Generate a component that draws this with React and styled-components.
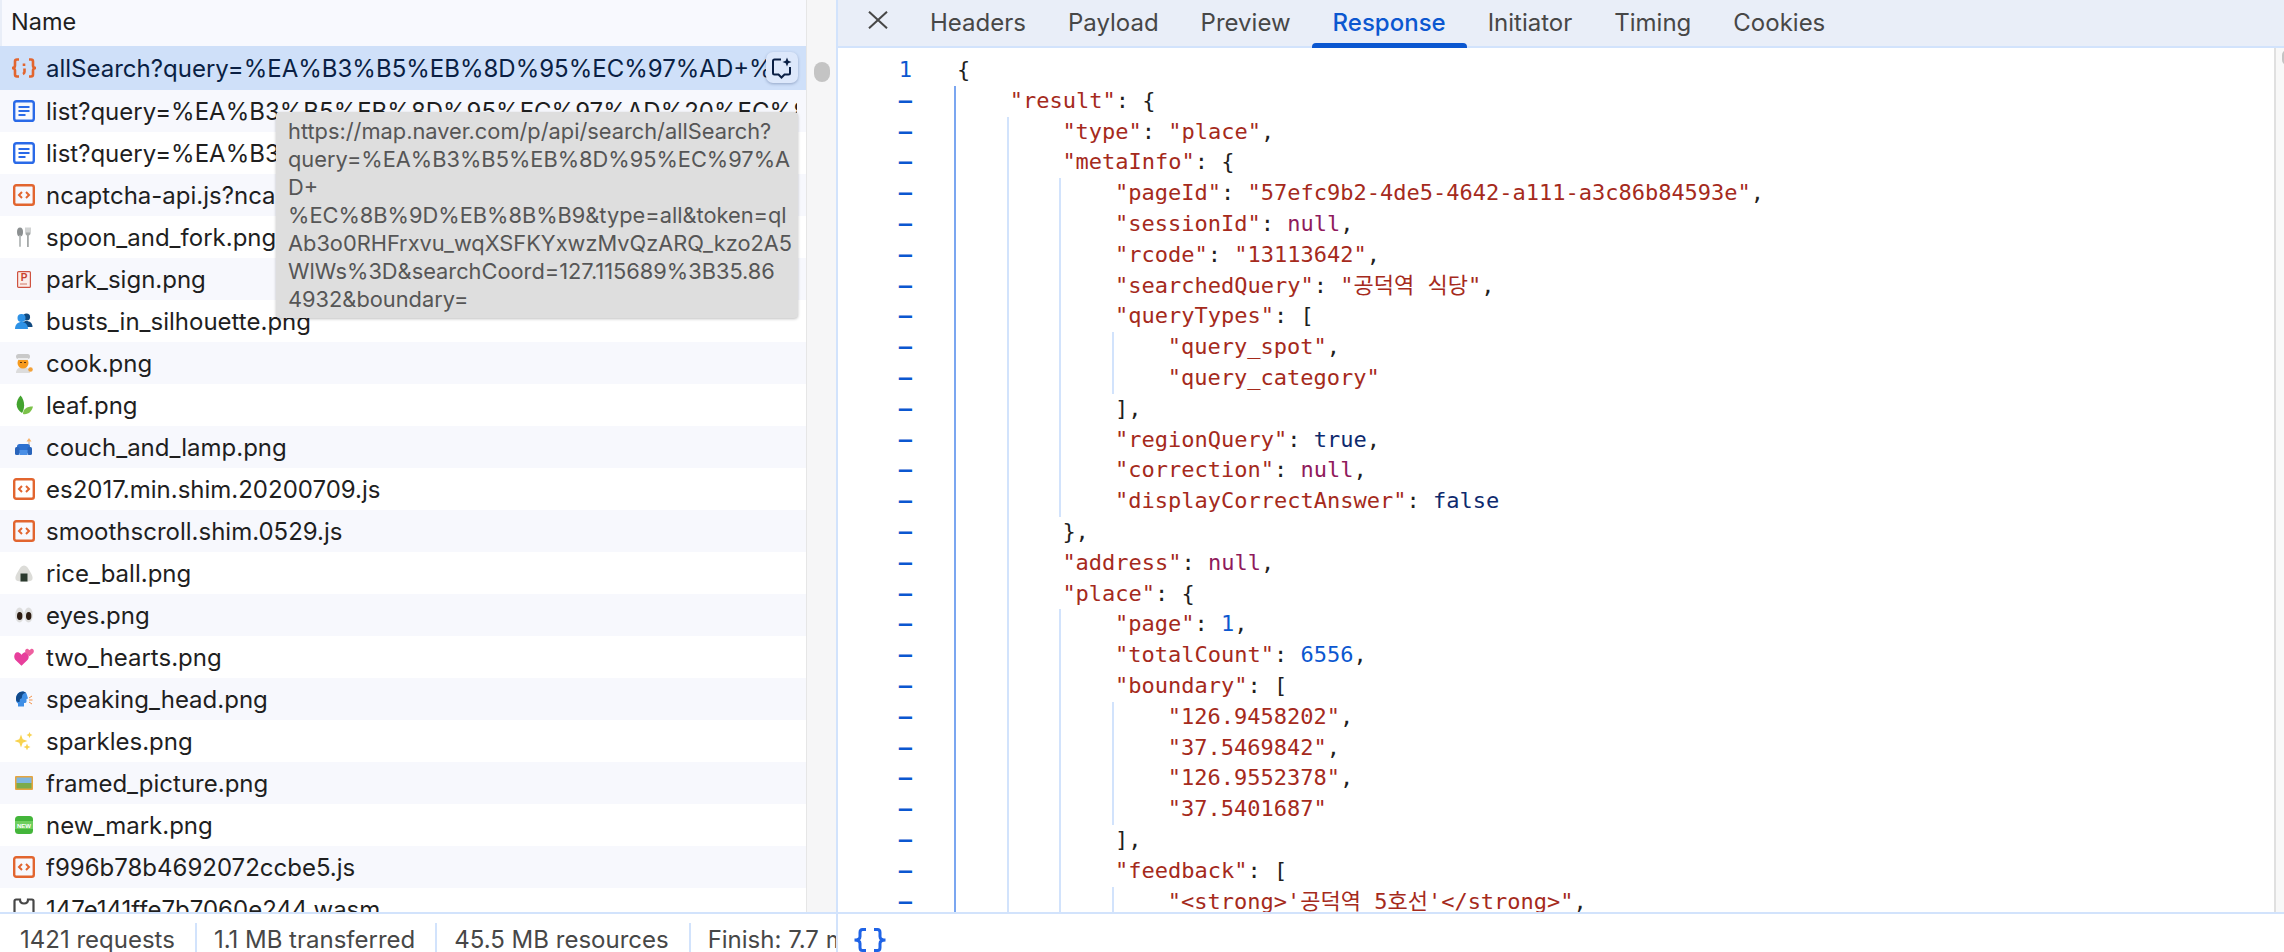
import React from 'react';
import styled, { createGlobalStyle } from 'styled-components';

const GlobalStyle = createGlobalStyle`
  html, body { margin: 0; padding: 0; height: 100%; overflow: hidden; background: #fff; }
  #root { height: 100%; }
`;

const uiFont = `Inter, "Noto Sans", sans-serif`;
const monoFont = `"DejaVu Sans Mono", "Noto Sans CJK KR", monospace`;

const Shell = styled.div`
  display: flex;
  width: 2284px;
  height: 952px;
  overflow: hidden;
  font-family: ${uiFont};
`;

const LeftPane = styled.div`
  display: flex;
  flex-direction: column;
  width: 836px;
  flex-shrink: 0;
  border-right: 2px solid #d2e3fc;
`;

const ListArea = styled.div`
  flex: 1;
  min-height: 0;
  display: flex;
  position: relative;
`;

const ListColumn = styled.div`
  width: 806px;
  flex-shrink: 0;
  overflow: hidden;
`;

const ListHeader = styled.div`
  height: 46px;
  display: flex;
  align-items: center;
  padding: 0 0 3px 9px;
  border-left: 2px solid #e9eef8;
  background: #f8f9fe;
  color: #1f1f1f;
  font-size: 23.5px;
  box-sizing: border-box;
`;

const Row = styled.div`
  position: relative;
  display: flex;
  align-items: center;
  height: ${(p) => (p.$selected ? 44 : 42)}px;
  padding-left: 13px;
  padding-right: 9px;
  box-sizing: border-box;
  background: ${(p) => (p.$selected ? '#cfe0f9' : p.$striped ? '#f7f8fd' : '#fff')};
  color: ${(p) => (p.$selected ? '#0a1f44' : '#1f1f1f')};
  font-size: 24px;
`;

const RowIcon = styled.span`
  width: 22px;
  height: 22px;
  flex-shrink: 0;
  display: flex;
  align-items: center;
  justify-content: center;
  margin-right: 11px;
  & > svg {
    flex-shrink: 0;
  }
`;

const RowName = styled.span`
  white-space: nowrap;
  overflow: hidden;
`;

const AskButton = styled.button`
  position: absolute;
  right: 8px;
  top: 6px;
  width: 32px;
  height: 31px;
  padding: 0;
  border: 0;
  border-radius: 7px;
  background: #dde8fb;
  box-shadow: 0 1px 3px rgba(40, 60, 110, 0.35);
  display: flex;
  align-items: center;
  justify-content: center;
`;

const ScrollColumn = styled.div`
  flex: 1;
  border-left: 1px solid #e6e6e6;
  background: #f6f6f7;
  padding: 62px 6px 0 7px;
  box-sizing: border-box;
`;

const ScrollThumb = styled.div`
  width: 16px;
  height: 20px;
  border-radius: 8px;
  background: #c4c4c4;
`;

const Tooltip = styled.div`
  position: absolute;
  left: 276px;
  top: 112px;
  width: 522px;
  height: 206px;
  box-sizing: border-box;
  padding: 5px 0 0 12px;
  background: #dedede;
  border-radius: 4px;
  box-shadow: 0 1px 3px rgba(0, 0, 0, 0.25);
  color: #565656;
  font-size: 21.8px;
  line-height: 28px;
  white-space: nowrap;
`;

const StatusBar = styled.div`
  height: 40px;
  flex-shrink: 0;
  box-sizing: border-box;
  border-top: 2px solid #d2e3fc;
  display: flex;
  align-items: flex-end;
  overflow: hidden;
  background: #fff;
`;

const StatusItem = styled.div`
  height: 29px;
  padding: 0 20px 0 17px;
  white-space: nowrap;
  color: #474747;
  font-size: 24px;
  line-height: 33px;
  border-right: ${(p) => (p.$last ? '0' : '2px solid #d2e3fc')};
  &:first-child {
    padding-left: 20px;
  }
`;

const RightPane = styled.div`
  flex: 1;
  min-width: 0;
  display: flex;
  flex-direction: column;
`;

const TabBar = styled.div`
  height: 48px;
  flex-shrink: 0;
  box-sizing: border-box;
  display: flex;
  background: #e9eef8;
  border-bottom: 2px solid #d2e3fc;
`;

const CloseButton = styled.div`
  width: 71px;
  height: 40px;
  padding-left: 9px;
  box-sizing: border-box;
  display: flex;
  align-items: center;
  justify-content: center;
`;

const Tab = styled.div`
  position: relative;
  height: 46px;
  padding: 0 21px 1px;
  box-sizing: border-box;
  display: flex;
  align-items: center;
  font-size: 24px;
  font-weight: ${(p) => (p.$active ? 500 : 400)};
  color: ${(p) => (p.$active ? '#0b57d0' : '#474747')};
  &::after {
    content: '';
    display: ${(p) => (p.$active ? 'block' : 'none')};
    position: absolute;
    left: 0;
    right: 0;
    bottom: -2px;
    height: 5px;
    border-radius: 4px 4px 0 0;
    background: #0b57d0;
  }
`;

const ResponseBody = styled.div`
  flex: 1;
  min-height: 0;
  display: flex;
  overflow: hidden;
`;

const Gutter = styled.div`
  width: 74px;
  flex-shrink: 0;
  padding-top: 7px;
  margin-right: 42px;
  text-align: right;
  font-family: ${monoFont};
  font-size: 22px;
  line-height: 30.8px;
  color: #0b57d0;
  font-weight: 700;
`;

const GutterMark = styled.div`
  height: 30.8px;
  font-weight: ${(p) => (p.$number ? 400 : 700)};
`;

const Code = styled.div`
  flex: 1;
  min-width: 0;
  padding-top: 7px;
  font-family: ${monoFont};
  font-size: 22px;
  line-height: 30.8px;
  color: #1f1f1f;
  white-space: pre;
`;

const Line = styled.div`
  height: 30.8px;
  padding-left: 3px;
`;

const Block = styled.div`
  border-left: 2px solid ${(p) => (p.$active ? '#7ba6f0' : '#d2e3fc')};
  padding-left: 50.7px;
`;

const Str = styled.span`color: #a52a1c;`;
const Nil = styled.span`color: #8f1a5c;`;
const Num = styled.span`color: #0b57d0;`;
const Bool = styled.span`color: #0e2a6e;`;

const RightScroll = styled.div`
  width: 10px;
  flex-shrink: 0;
  box-sizing: border-box;
  border-left: 2px solid #e0e0e0;
  background: #f8f8f8;
  padding: 2px 0 0 6px;
  overflow: hidden;
`;

const RightThumb = styled.div`
  width: 10px;
  height: 15px;
  border-radius: 5px;
  background: #c4c4c4;
`;

const FormatIcon = styled.div`
  padding: 14px 0 0 15px;
  line-height: 0;
`;

const DocIcon = () => (
  <svg width="22" height="22" viewBox="0 0 22 22" fill="none">
    <rect x="1.2" y="1.2" width="19.6" height="19.6" rx="2.4" stroke="#2a6ae8" strokeWidth="2.4" />
    <path d="M5.5 7h11M5.5 11h11M5.5 15h7" stroke="#2a6ae8" strokeWidth="2" />
  </svg>
);

const ScriptIcon = () => (
  <svg width="22" height="22" viewBox="0 0 22 22" fill="none">
    <rect x="1.2" y="1.2" width="19.6" height="19.6" rx="2" stroke="#e2652f" strokeWidth="2.4" />
    <path d="M9 8l-3 3 3 3M13 8l3 3-3 3" stroke="#e2652f" strokeWidth="2" />
  </svg>
);

const JsonIcon = () => (
  <svg width="26" height="20" viewBox="0 0 26 20" fill="none" stroke="#e2652f" strokeWidth="2.6">
    <path d="M8 1.500H6C4.500 1.500 4 2.500 4 3.500v4C4 9 3 10 1 10c2 0 3 1 3 2.500v4c0 1 .5 2 2 2h2" />
    <path d="M18 1.500h2c1.500 0 2 1 2 2v4c0 1.500 1 2.500 3 2.500-2 0-3 1-3 2.500v4c0 1-.5 2-2 2h-2" />
    <path d="M13 5.500v2.500M13.500 10.500v3.500c0 .8-.6 1.500-1.600 2" />
  </svg>
);

const WasmIcon = () => (
  <svg width="22" height="22" viewBox="0 0 22 22" fill="none">
    <path d="M7 1.500H3a1.500 1.500 0 0 0-1.500 1.500v16a1.500 1.500 0 0 0 1.500 1.500h16a1.500 1.500 0 0 0 1.500-1.500V3A1.500 1.500 0 0 0 19 1.500h-4c0 2.500-1.500 4-4 4s-4-1.500-4-4z" stroke="#474747" strokeWidth="2.2" />
  </svg>
);

const Spoon = () => (
  <svg width="16" height="20" viewBox="0 0 16 20">
    <ellipse cx="4" cy="5" rx="3" ry="4.500" fill="#8b8f90" />
    <rect x="3.100" y="8" width="1.800" height="12" rx=".9" fill="#b4b8b8" />
    <path d="M9.500 0.500v6c0 1 .8 1.800 1.500 2V20h1.800V8.500c.8-.2 1.700-1 1.700-2v-6h-1v5h-1v-5h-1v5h-1v-5z" fill="#a4a8a8" />
  </svg>
);

const Park = () => (
  <svg width="14" height="17" viewBox="0 0 14 17">
    <rect x=".6" y=".6" width="12.800" height="15.800" rx="1" fill="#fbeeea" stroke="#cf5240" strokeWidth="1.200" />
    <text x="7" y="10" textAnchor="middle" fontFamily="Liberation Sans, sans-serif" fontWeight="700" fontSize="10" fill="#c9402e">P</text>
    <path d="M3 13h7" stroke="#d98a7c" strokeWidth="1.200" />
  </svg>
);

const Busts = () => (
  <svg width="18" height="18" viewBox="0 0 18 18">
    <circle cx="11.500" cy="5" r="3.600" fill="#114a80" />
    <path d="M6 15c0-4 2.500-6 5.500-6s6 2 6 6z" fill="#114a80" />
    <circle cx="6.500" cy="6" r="4" fill="#2e92e6" />
    <path d="M0 17c0-4.500 3-7 6.500-7s6.500 2.500 6.500 7z" fill="#2e92e6" />
  </svg>
);

const Cook = () => (
  <svg width="20" height="20" viewBox="0 0 20 20">
    <path d="M2 20c0-4 3-6 7-6s7 2 7 6z" fill="#dcdcdc" />
    <circle cx="9" cy="10" r="5.500" fill="#f59a1e" />
    <path d="M6 9.500h2M10 9.500h2" stroke="#5a3510" strokeWidth="1" />
    <rect x="2" y="1" width="14" height="5" rx="2.500" fill="#c9c9c9" />
    <path d="M4 5h10v2H4z" fill="#ececec" />
    <circle cx="16.500" cy="16.500" r="2.300" fill="#f2a23a" />
  </svg>
);

const Leaf = () => (
  <svg width="18" height="20" viewBox="0 0 18 20">
    <path d="M7 18C1 15-.5 7 5.500 .5 9.500 5 10.500 12 7 18z" fill="#43a32f" />
    <path d="M8 19c0-5 3.500-7.500 10-7.500-1 5-5 8.500-10 7.500z" fill="#7cc24a" />
  </svg>
);

const Couch = () => (
  <svg width="18" height="18" viewBox="0 0 18 18">
    <path d="M14 0l2.500 3.500h-5z" fill="#f6b26b" />
    <path d="M14 3.500V8" stroke="#c99a6a" strokeWidth=".9" />
    <rect x="2" y="6" width="13" height="9" rx="2.500" fill="#2f71cf" />
    <rect x="0" y="9" width="4.500" height="8" rx="1.500" fill="#2a65bb" />
    <rect x="12.500" y="9" width="4.500" height="8" rx="1.500" fill="#2a65bb" />
    <rect x="4.500" y="12" width="8" height="5" fill="#4a8fe6" />
  </svg>
);

const RiceBall = () => (
  <svg width="18" height="17" viewBox="0 0 18 17">
    <path d="M9 .5c2.500 0 4 2 6 6 2 3.500 3 5 2.500 7.500-.5 2-3 2.500-8.500 2.500S1 16 .5 14C0 11.500 1 10 3 6.500c2-4 3.500-6 6-6z" fill="#dcdcd8" />
    <rect x="5.500" y="8.500" width="7" height="8" fill="#2b3a2e" />
  </svg>
);

const Eyes = () => (
  <svg width="18" height="16" viewBox="0 0 18 16">
    <ellipse cx="4.500" cy="8" rx="4.300" ry="7.500" fill="#dedede" />
    <ellipse cx="13.500" cy="8" rx="4.300" ry="7.500" fill="#dedede" />
    <ellipse cx="4.700" cy="9" rx="2.700" ry="4" fill="#2d1d12" />
    <ellipse cx="13.700" cy="9" rx="2.700" ry="4" fill="#2d1d12" />
  </svg>
);

const heart = 'M6 11L1 6.500C-1 4 1 0 3.500 1 5 1.500 6 3 6 3s1-1.500 2.500-2C11 0 13 4 11 6.500z';

const TwoHearts = () => (
  <svg width="20" height="18" viewBox="0 0 20 18">
    <path d={heart} transform="translate(0 3) scale(1.250 1.350)" fill="#e73f9c" />
    <path d={heart} transform="translate(11 0) scale(.75 .75)" fill="#ee5f9f" />
  </svg>
);

const SpeakingHead = () => (
  <svg width="18" height="17" viewBox="0 0 18 17">
    <path d="M1 8c0-4.500 3-7.500 6.500-7.500 2.500 0 4 1.500 4.500 3.500l1 3.500-1.500.5v2.500c0 1-1 1.500-2.500 1.500v3.500H3v-3C1.500 11.500 1 10 1 8z" fill="#3f8fe6" />
    <path d="M1 8c0-4.500 3-7.500 6.500-7.500 1.500 0 2.500.5 3.500 1.500-3 0-4 2-4 4 0 1-1 2-2 2l-.5 3C2 11.500 1 10 1 8z" fill="#124a8a" />
    <path d="M14 7l3-2M14 9h3.500M14 11l3 2" stroke="#f3934a" strokeWidth="1" fill="none" />
  </svg>
);

const Sparkles = () => (
  <svg width="18" height="18" viewBox="0 0 18 18" fill="#f8d34f">
    <path d="M6 2.500l1.700 4.800L12.500 9l-4.800 1.700L6 15.500l-1.700-4.800L-.5 9l4.800-1.700z" />
    <path d="M14.500 0l.9 2.100 2.100.9-2.100.9-.9 2.100-.9-2.100-2.100-.9 2.100-.9z" />
    <path d="M12 11.500l1 2.500 2.500 1-2.500 1-1 2.500-1-2.500-2.500-1 2.500-1z" />
  </svg>
);

const FramedPicture = () => (
  <svg width="18" height="14" viewBox="0 0 18 14">
    <rect width="18" height="14" rx="1" fill="#e6a53e" />
    <rect x="1.500" y="1.500" width="15" height="5.500" fill="#7fb6e0" />
    <rect x="1.500" y="7" width="15" height="5.500" fill="#7cab4c" />
  </svg>
);

const NewMark = () => (
  <svg width="18" height="18" viewBox="0 0 18 18">
    <rect width="18" height="18" rx="3.500" fill="#43b53a" />
    <rect y="5" width="18" height="8" fill="#6fcf5f" />
    <text x="9" y="11.500" textAnchor="middle" fontFamily="Liberation Sans, sans-serif" fontWeight="700" fontSize="6" fill="#fff">NEW</text>
  </svg>
);

const requests = [
  { name: 'list?query=%EA%B3%B5%EB%8D%95%EC%97%AD%20%EC%8B%9D%EB%8B%B9&type=all', icon: DocIcon },
  { name: 'list?query=%EA%B3%B5%EB%8D%95%EC%97%AD%20%EC%8B%9D%EB%8B%B9&type=all', icon: DocIcon },
  { name: 'ncaptcha-api.js?ncaptcha=1', icon: ScriptIcon },
  { name: 'spoon_and_fork.png', icon: Spoon },
  { name: 'park_sign.png', icon: Park },
  { name: 'busts_in_silhouette.png', icon: Busts },
  { name: 'cook.png', icon: Cook },
  { name: 'leaf.png', icon: Leaf },
  { name: 'couch_and_lamp.png', icon: Couch },
  { name: 'es2017.min.shim.20200709.js', icon: ScriptIcon },
  { name: 'smoothscroll.shim.0529.js', icon: ScriptIcon },
  { name: 'rice_ball.png', icon: RiceBall },
  { name: 'eyes.png', icon: Eyes },
  { name: 'two_hearts.png', icon: TwoHearts },
  { name: 'speaking_head.png', icon: SpeakingHead },
  { name: 'sparkles.png', icon: Sparkles },
  { name: 'framed_picture.png', icon: FramedPicture },
  { name: 'new_mark.png', icon: NewMark },
  { name: 'f996b78b4692072ccbe5.js', icon: ScriptIcon },
  { name: '147e141ffe7b7060e244.wasm', icon: WasmIcon },
];

const tooltipLines = [
  'https://map.naver.com/p/api/search/allSearch?',
  'query=%EA%B3%B5%EB%8D%95%EC%97%A',
  'D+',
  '%EC%8B%9D%EB%8B%B9&type=all&token=ql',
  'Ab3o0RHFrxvu_wqXSFKYxwzMvQzARQ_kzo2A5',
  'WlWs%3D&searchCoord=127.115689%3B35.86',
  '4932&boundary=',
];

const tabs = ['Headers', 'Payload', 'Preview', 'Response', 'Initiator', 'Timing', 'Cookies'];

const App = () => (
  <Shell>
    <GlobalStyle />
    <LeftPane>
      <ListArea>
        <ListColumn>
          <ListHeader>Name</ListHeader>
          <Row $selected>
            <RowIcon><JsonIcon /></RowIcon>
            <RowName>allSearch?query=%EA%B3%B5%EB%8D%95%EC%97%AD+%EC%8B%9D%EB%8B%B9&amp;type=all</RowName>
            <AskButton>
              <svg width="22" height="22" viewBox="0 0 22 22" fill="none">
                <path d="M10 2.500H3.500A1.500 1.500 0 0 0 2 4v12a1.500 1.500 0 0 0 1.500 1.500h4l3 3 3-3h4a1.500 1.500 0 0 0 1.500-1.500v-6" stroke="#0a1f44" strokeWidth="2" />
                <path d="M16 .5l1.300 3.200L20.500 5l-3.200 1.300L16 9.500l-1.300-3.200L11.500 5l3.200-1.300z" fill="#0a1f44" />
              </svg>
            </AskButton>
          </Row>
          {requests.map((r, i) => (
            <Row key={i} $striped={i % 2 === 0}>
              <RowIcon><r.icon /></RowIcon>
              <RowName>{r.name}</RowName>
            </Row>
          ))}
        </ListColumn>
        <ScrollColumn><ScrollThumb /></ScrollColumn>
        <Tooltip>
          {tooltipLines.map((t) => <div key={t}>{t}</div>)}
        </Tooltip>
      </ListArea>
      <StatusBar>
        <StatusItem>1421 requests</StatusItem>
        <StatusItem>1.1 MB transferred</StatusItem>
        <StatusItem>45.5 MB resources</StatusItem>
        <StatusItem $last>Finish: 7.7 min</StatusItem>
      </StatusBar>
    </LeftPane>
    <RightPane>
      <TabBar>
        <CloseButton>
          <svg width="20" height="18" viewBox="0 0 20 18">
            <path d="M1 .7l18 16.600M19 .7L1 17.300" stroke="#474747" strokeWidth="2" />
          </svg>
        </CloseButton>
        {tabs.map((t) => <Tab key={t} $active={t === 'Response'}>{t}</Tab>)}
      </TabBar>
      <ResponseBody>
        <Gutter>
          <GutterMark $number>1</GutterMark>
          {Array.from({ length: 27 }, (_, i) => <GutterMark key={i}>–</GutterMark>)}
        </Gutter>
        <Code>
          <Line>{'{'}</Line>
          <Block $active>
            <Line><Str>"result"</Str>: {'{'}</Line>
            <Block>
              <Line><Str>"type"</Str>: <Str>"place"</Str>,</Line>
              <Line><Str>"metaInfo"</Str>: {'{'}</Line>
              <Block>
                <Line><Str>"pageId"</Str>: <Str>"57efc9b2-4de5-4642-a111-a3c86b84593e"</Str>,</Line>
                <Line><Str>"sessionId"</Str>: <Nil>null</Nil>,</Line>
                <Line><Str>"rcode"</Str>: <Str>"13113642"</Str>,</Line>
                <Line><Str>"searchedQuery"</Str>: <Str>"공덕역 식당"</Str>,</Line>
                <Line><Str>"queryTypes"</Str>: [</Line>
                <Block>
                  <Line><Str>"query_spot"</Str>,</Line>
                  <Line><Str>"query_category"</Str></Line>
                </Block>
                <Line>],</Line>
                <Line><Str>"regionQuery"</Str>: <Bool>true</Bool>,</Line>
                <Line><Str>"correction"</Str>: <Nil>null</Nil>,</Line>
                <Line><Str>"displayCorrectAnswer"</Str>: <Bool>false</Bool></Line>
              </Block>
              <Line>{'},'}</Line>
              <Line><Str>"address"</Str>: <Nil>null</Nil>,</Line>
              <Line><Str>"place"</Str>: {'{'}</Line>
              <Block>
                <Line><Str>"page"</Str>: <Num>1</Num>,</Line>
                <Line><Str>"totalCount"</Str>: <Num>6556</Num>,</Line>
                <Line><Str>"boundary"</Str>: [</Line>
                <Block>
                  <Line><Str>"126.9458202"</Str>,</Line>
                  <Line><Str>"37.5469842"</Str>,</Line>
                  <Line><Str>"126.9552378"</Str>,</Line>
                  <Line><Str>"37.5401687"</Str></Line>
                </Block>
                <Line>],</Line>
                <Line><Str>"feedback"</Str>: [</Line>
                <Block>
                  <Line><Str>"&lt;strong&gt;'공덕역 5호선'&lt;/strong&gt;"</Str>,</Line>
                </Block>
              </Block>
            </Block>
          </Block>
        </Code>
        <RightScroll><RightThumb /></RightScroll>
      </ResponseBody>
      <StatusBar>
        <FormatIcon>
          <svg width="34" height="24" viewBox="0 0 34 24" fill="none" stroke="#1f63e6" strokeWidth="3">
            <path d="M13 1.500H9.500C7.500 1.500 7 3 7 4.500v4C7 10.500 5 12 1.500 12 5 12 7 13.500 7 15.500v4c0 1.500.5 3 2.500 3H13" />
            <path d="M21 1.500h3.500C26.500 1.500 27 3 27 4.500v4c0 2 2 3.500 5.500 3.500-3.500 0-5.500 1.500-5.500 3.500v4c0 1.500-.5 3-2.500 3H21" />
          </svg>
        </FormatIcon>
      </StatusBar>
    </RightPane>
  </Shell>
);

export default App;
